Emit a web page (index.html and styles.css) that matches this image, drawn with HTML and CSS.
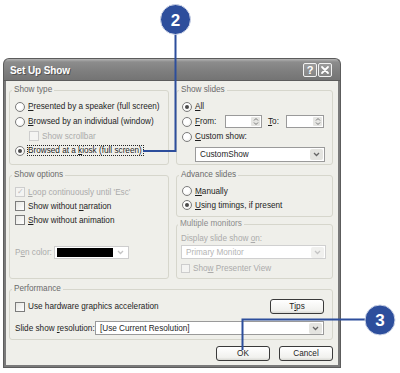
FILE: index.html
```html
<!DOCTYPE html>
<html>
<head>
<meta charset="utf-8">
<link rel="stylesheet" href="styles.css">
</head>
<body>
<div class="page">
  <div class="dialog">
    <div class="titlebar">
      <span class="title">Set Up Show</span>
      <div class="tbtns">
        <span class="tbtn help">?</span>
        <span class="tbtn close"><svg width="10" height="10" viewBox="0 0 10 10"><path d="M2 2 L8 8 M8 2 L2 8" stroke="#fff" stroke-width="1.8" stroke-linecap="round"/></svg></span>
      </div>
    </div>
    <div class="frame">
      <div class="body">
        <div class="grid">
          <fieldset class="g-type">
            <legend>Show type</legend>
            <div class="row"><span class="radio"></span><span><u>P</u>resented by a speaker (full screen)</span></div>
            <div class="row"><span class="radio"></span><span><u>B</u>rowsed by an individual (window)</span></div>
            <div class="row r14 indent dis"><span class="check dis"></span><span>Show scrollbar</span></div>
            <div class="row"><span class="radio on"></span><span class="focus">Browsed at a <u>k</u>iosk (full screen)</span></div>
          </fieldset>

          <fieldset class="g-slides">
            <legend>Show slides</legend>
            <div class="row"><span class="radio on"></span><span><u>A</u>ll</span></div>
            <div class="row">
              <span class="radio"></span><span class="lbl-from"><u>F</u>rom:</span>
              <span class="spin w37"><span class="spinbtn"><svg width="6" height="9" viewBox="0 0 6 9"><path d="M1 3.5 L3 1.5 L5 3.5 M1 5.5 L3 7.5 L5 5.5" fill="none" stroke="#777" stroke-width="1"/></svg></span></span>
              <span class="lbl-to"><u>T</u>o:</span>
              <span class="spin w38"><span class="spinbtn"><svg width="6" height="9" viewBox="0 0 6 9"><path d="M1 3.5 L3 1.5 L5 3.5 M1 5.5 L3 7.5 L5 5.5" fill="none" stroke="#777" stroke-width="1"/></svg></span></span>
            </div>
            <div class="row"><span class="radio"></span><span><u>C</u>ustom show:</span></div>
            <div class="combo custom"><span class="ctext">CustomShow</span><span class="dd"><svg width="7" height="5" viewBox="0 0 7 5"><path d="M1 1 L3.5 3.5 L6 1" fill="none" stroke="#666" stroke-width="1.3"/></svg></span></div>
          </fieldset>

          <fieldset class="g-options">
            <legend>Show options</legend>
            <div class="row r14 dis"><span class="check dis checked">✓</span><span><u>L</u>oop continuously until 'Esc'</span></div>
            <div class="row r14"><span class="check"></span><span>Show without <u>n</u>arration</span></div>
            <div class="row r14"><span class="check"></span><span><u>S</u>how without animation</span></div>
            <div class="row r14 pen dis"><span class="lbl-pen">P<u>e</u>n color:</span>
              <span class="colorpick"><span class="swatch"></span><span class="ddc"><svg width="7" height="5" viewBox="0 0 7 5"><path d="M1 1 L3.5 3.5 L6 1" fill="none" stroke="#c4c4c4" stroke-width="1.3"/></svg></span></span>
            </div>
          </fieldset>

          <div class="col">
            <fieldset class="g-advance">
              <legend>Advance slides</legend>
              <div class="row r14"><span class="radio"></span><span><u>M</u>anually</span></div>
              <div class="row r14"><span class="radio on"></span><span><u>U</u>sing timings, if present</span></div>
            </fieldset>
            <fieldset class="g-multi dis">
              <legend>Multiple monitors</legend>
              <div class="row r12"><span>Display slide show <u>o</u>n:</span></div>
              <div class="combo primary"><span class="ctext">Primary Monitor</span><span class="dd"><svg width="7" height="5" viewBox="0 0 7 5"><path d="M1 1 L3.5 3.5 L6 1" fill="none" stroke="#c4c4c4" stroke-width="1.3"/></svg></span></div>
              <div class="row r12 presenter"><span class="check dis small"></span><span>Sho<u>w</u> Presenter View</span></div>
            </fieldset>
          </div>

          <fieldset class="g-perf">
            <legend>Performance</legend>
            <div class="row perf1"><span class="check"></span><span>Use hardware graphics acceleration</span><span class="btn tips">T<u>i</u>ps</span></div>
            <div class="row perf2"><span class="lbl-res">Slide show <u>r</u>esolution:</span>
              <div class="combo res"><span class="ctext">[Use Current Resolution]</span><span class="dd"><svg width="7" height="5" viewBox="0 0 7 5"><path d="M1 1 L3.5 3.5 L6 1" fill="none" stroke="#666" stroke-width="1.3"/></svg></span></div>
            </div>
          </fieldset>
        </div>
        <div class="footer">
          <span class="btn">OK</span>
          <span class="btn">Cancel</span>
        </div>
      </div>
    </div>
  </div>
</div>
<svg class="callouts" width="400" height="373" viewBox="0 0 400 373">
  <polyline points="175.5,34 175.5,151 143,151" fill="none" stroke="#2d4e9c" stroke-width="2"/>
  <circle cx="175.5" cy="19.5" r="15" fill="#2d4e9c" stroke="#cfd6e8" stroke-width="1"/>
  <text x="175.5" y="25.5" text-anchor="middle" class="num">2</text>
  <polyline points="365,319.5 242.5,319.5 242.5,350" fill="none" stroke="#2d4e9c" stroke-width="2"/>
  <circle cx="380" cy="320" r="15" fill="#2d4e9c" stroke="#cfd6e8" stroke-width="1"/>
  <text x="380" y="326" text-anchor="middle" class="num">3</text>
</svg>
</body>
</html>
```
FILE: styles.css
```css
* { box-sizing: border-box; }
html, body { margin: 0; background: #fff; }
body {
  font-family: "Liberation Sans", Arial, sans-serif;
  font-size: 8.2px;
  color: #1e1e1e;
  width: 400px;
  height: 373px;
  overflow: hidden;
  position: relative;
}
u { text-decoration: underline; text-underline-offset: 1px; }

.page { padding: 58px 0 0 3px; }
.dialog {
  width: 338px;
  height: 310px;
  display: flex;
  flex-direction: column;
}
.titlebar {
  height: 22px;
  flex: none;
  border-radius: 6px 6px 0 0;
  background: linear-gradient(#b4b4b4 0, #8c8c8c 3px, #7e7e7e 60%, #747474 100%);
  display: flex;
  align-items: center;
  justify-content: space-between;
  padding: 1px 8px 0 6px;
  border: 1px solid #5c5c5c;
  border-bottom: none;
}
.title {
  color: #fff;
  font-weight: bold;
  font-size: 10px;
  letter-spacing: -0.1px;
  text-shadow: 1px 1px 0 #555;
}
.tbtns { display: flex; gap: 1px; }
.tbtn {
  width: 14px;
  height: 14px;
  border: 1px solid #f2f2f2;
  border-radius: 2px;
  background: linear-gradient(#9c9c9c, #858585);
  color: #fff;
  font-weight: bold;
  font-size: 11px;
  display: flex;
  align-items: center;
  justify-content: center;
  line-height: 1;
}
.frame {
  flex: 1;
  border: 3px solid #7a7a7a;
  border-top: none;
  outline: 1px solid #5c5c5c;
  outline-offset: -1px;
  display: flex;
}
.body {
  flex: 1;
  background: #efefea;
  padding: 5px 2px 0 3px;
}

.grid {
  display: grid;
  grid-template-columns: 160px 157px;
  grid-template-rows: 80px 109px 56px;
  column-gap: 7px;
  row-gap: 5px;
}
fieldset {
  margin: 0;
  padding: 0 4px 0 5px;
  min-width: 0;
  border: 1px solid #d6d6cc;
  border-radius: 3px;
}
legend {
  padding: 0 2px;
  margin-left: -3px;
  line-height: 10px;
  color: #6a6a6a;
}
.g-perf { grid-column: 1 / 3; padding: 5px 8px 0 5px; }
.col { display: flex; flex-direction: column; gap: 2px; }
.g-advance { height: 47px; flex: none; padding: 4px 4px 0 5px; }
.g-multi { flex: 1; padding: 3px 7px 0 4px; }
.g-type { padding-top: 4px; }
.g-slides { padding-top: 4px; }
.g-options { padding-top: 5px; }

.row {
  display: flex;
  align-items: center;
  height: 15px;
  white-space: nowrap;
}
.r14 { height: 14px; }
.r12 { height: 12px; }
.indent { padding-left: 14px; }
.dis { color: #ababab; }
.g-multi legend { color: #8c8c8c; }

.radio {
  width: 10px;
  height: 10px;
  border: 1px solid #7c7c7c;
  border-radius: 50%;
  background: radial-gradient(circle at 40% 40%, #fff 40%, #e4e4e0);
  margin-right: 3px;
  flex: none;
  position: relative;
}
.radio.on::after {
  content: "";
  position: absolute;
  left: 2px;
  top: 2px;
  width: 4px;
  height: 4px;
  border-radius: 50%;
  background: #4a4a4a;
}
.check {
  width: 10px;
  height: 10px;
  border: 1px solid #7c7c7c;
  background: linear-gradient(135deg, #e6e6e2, #fff);
  margin-right: 3px;
  flex: none;
  display: flex;
  align-items: center;
  justify-content: center;
  font-size: 8px;
  line-height: 1;
}
.check.dis { border-color: #cdcdcd; background: #f4f4f2; color: #bdbdbd; }
.check.small { width: 9px; height: 9px; }
.focus { outline: 1px dotted #222; outline-offset: 0; padding: 0 1px 0 0; }

.lbl-from { width: 30px; }
.lbl-to { width: 18px; margin-left: 6px; }
.spin {
  height: 13px;
  border: 1px solid #9a9a9a;
  background: #fff;
  display: flex;
  justify-content: flex-end;
  padding: 1px;
}
.w37 { width: 37px; }
.w38 { width: 38px; }
.spinbtn {
  width: 9px;
  background: #e6e6e3;
  border-radius: 1px;
  display: flex;
  align-items: center;
  justify-content: center;
}

.combo {
  height: 15px;
  border: 1px solid #9a9a9a;
  background: #fff;
  display: flex;
  align-items: center;
  padding: 1px;
}
.ctext { flex: 1; padding-left: 3px; white-space: nowrap; }
.dd {
  width: 13px;
  height: 11px;
  background: #e4e4e0;
  border-radius: 2px;
  display: flex;
  align-items: center;
  justify-content: center;
}
.custom { width: 130px; margin: 3px 0 0 13px; }
.primary { width: 145px; margin-top: 1px; height: 14px; border-color: #d0d0d0; color: #b5b5b5; }
.primary .dd { background: #f0f0ee; }
.presenter { margin-top: 3px; }

.pen { margin-top: 18px; }
.lbl-pen { width: 39px; }
.colorpick {
  width: 75px;
  height: 13px;
  border: 1px solid #cdcdcd;
  background: #fff;
  display: flex;
  align-items: center;
  padding: 1px 1px 1px 2px;
}
.swatch { width: 56px; height: 9px; background: #000; }
.ddc { flex: 1; display: flex; justify-content: center; }

.perf1 { justify-content: flex-start; }
.perf1 .tips { margin-left: auto; }
.perf2 { height: 14px; margin-top: 7px; }
.lbl-res { width: 80px; }
.res { flex: 1; height: 14px; }

.btn {
  width: 54px;
  height: 15px;
  border: 1px solid #3a3a3a;
  border-radius: 3px;
  background: linear-gradient(#fff, #f1f1ee 80%, #d9d9d4);
  display: flex;
  align-items: center;
  justify-content: center;
  color: #1e1e1e;
}
.footer {
  display: flex;
  justify-content: flex-end;
  gap: 9px;
  margin-top: 6px;
  padding-right: 3px;
}

.callouts { position: absolute; left: 0; top: 0; }
.num {
  font-family: "Liberation Sans", Arial, sans-serif;
  font-weight: bold;
  font-size: 17px;
  fill: #fff;
}
```
